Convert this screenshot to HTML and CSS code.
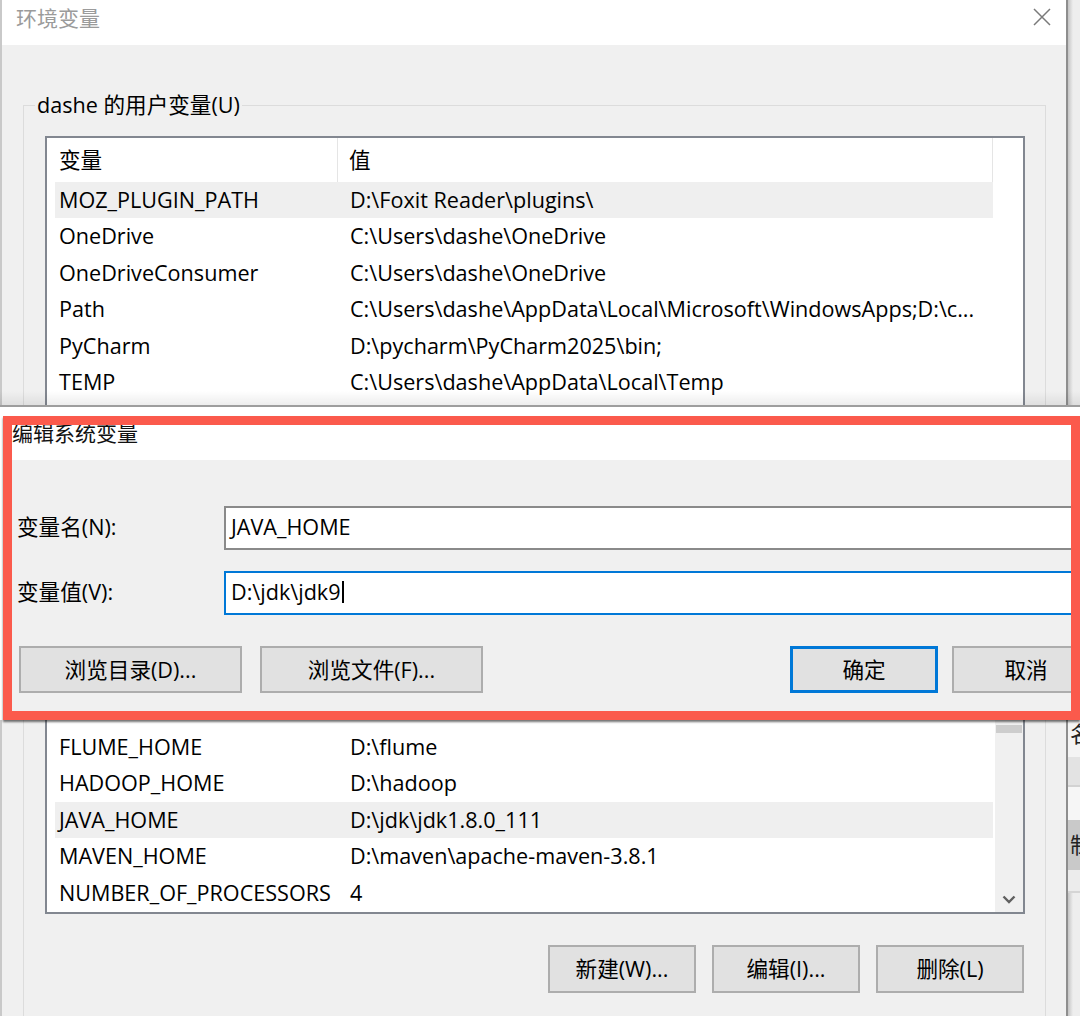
FILE: index.html
```html
<!DOCTYPE html>
<html lang="zh-CN">
<head>
<meta charset="utf-8">
<title>环境变量</title>
<link rel="stylesheet" href="styles.css">
</head>
<body>
<section class="top">
  <div class="win">
    <div class="titlebar">
      <span class="title">环境变量</span>
      <svg class="close" viewBox="0 0 18 18" width="18" height="18"><path d="M1 1 L17 17 M17 1 L1 17" stroke="#7a7a7a" stroke-width="1.5" fill="none"/></svg>
    </div>
    <fieldset class="group">
      <legend>dashe 的用户变量(U)</legend>
      <div class="listbox">
        <div class="lv-main">
          <div class="lv-head"><div class="h1">变量</div><div class="h2">值</div></div>
          <div class="row sel"><div class="k">MOZ_PLUGIN_PATH</div><div class="v">D:\Foxit Reader\plugins\</div></div>
          <div class="row"><div class="k">OneDrive</div><div class="v">C:\Users\dashe\OneDrive</div></div>
          <div class="row"><div class="k">OneDriveConsumer</div><div class="v">C:\Users\dashe\OneDrive</div></div>
          <div class="row"><div class="k">Path</div><div class="v">C:\Users\dashe\AppData\Local\Microsoft\WindowsApps;D:\c...</div></div>
          <div class="row"><div class="k">PyCharm</div><div class="v">D:\pycharm\PyCharm2025\bin;</div></div>
          <div class="row"><div class="k">TEMP</div><div class="v">C:\Users\dashe\AppData\Local\Temp</div></div>
          <div class="row empty"></div>
        </div>
        <div class="lv-scroll"></div>
      </div>
    </fieldset>
  </div>
  <div class="strip strip-top"></div>
</section>

<div class="gap"></div>

<section class="edit">
  <div class="dlg-title"><span>编辑系统变量</span></div>
  <div class="dlg-body">
    <div class="field">
      <label class="lbl">变量名(N):</label>
      <div class="input">JAVA_HOME</div>
    </div>
    <div class="field field2">
      <label class="lbl">变量值(V):</label>
      <div class="input focus">D:\jdk\jdk9<span class="caret"></span></div>
    </div>
    <div class="dlg-buttons">
      <button class="btn wide">浏览目录(D)...</button>
      <button class="btn wide second">浏览文件(F)...</button>
      <span class="spacer"></span>
      <button class="btn ok">确定</button>
      <button class="btn cancel">取消</button>
    </div>
  </div>
</section>

<section class="bottom">
  <div class="win win-bottom">
    <div class="group2">
      <div class="listbox listbox2">
        <div class="lv-main rows2">
          <div class="row"><div class="k">FLUME_HOME</div><div class="v">D:\flume</div></div>
          <div class="row"><div class="k">HADOOP_HOME</div><div class="v">D:\hadoop</div></div>
          <div class="row sel"><div class="k">JAVA_HOME</div><div class="v">D:\jdk\jdk1.8.0_111</div></div>
          <div class="row"><div class="k">MAVEN_HOME</div><div class="v">D:\maven\apache-maven-3.8.1</div></div>
          <div class="row"><div class="k">NUMBER_OF_PROCESSORS</div><div class="v">4</div></div>
        </div>
        <div class="vscroll">
          <div class="thumb"></div>
          <svg class="chev" viewBox="0 0 14 9" width="14" height="9"><path d="M1.5 1.5 L7 7 L12.5 1.5" stroke="#606060" stroke-width="2.4" fill="none"/></svg>
        </div>
      </div>
      <div class="btnrow">
        <button class="btn">新建(W)...</button>
        <button class="btn">编辑(I)...</button>
        <button class="btn">删除(L)</button>
      </div>
    </div>
  </div>
  <div class="strip strip-bottom">
    <div class="sb sb-a">名</div>
    <div class="sb sb-b"></div>
    <div class="sb sb-c"></div>
    <div class="sb sb-d">制</div>
    <div class="sb sb-e"></div>
  </div>
</section>
</body>
</html>
```

FILE: styles.css
```css
* { box-sizing: border-box; }
html, body { margin: 0; padding: 0; }
body {
  width: 1080px;
  height: 1016px;
  overflow: hidden;
  background: #fff;
  font-family: "Open Sans", "Noto Sans CJK SC", sans-serif;
  font-size: 21.6px;
  color: #000;
}

/* ---------- top window (环境变量) ---------- */
.top {
  display: flex;
  height: 407px;
  overflow: hidden;
  position: relative;
}
.top::after {
  content: "";
  position: absolute;
  left: 0; right: 0; bottom: 0;
  height: 14px;
  background: linear-gradient(rgba(0,0,0,0), rgba(0,0,0,0.07));
  border-bottom: 2px solid #9d9d9d;
}
.win {
  flex: 0 0 1068px;
  width: 1068px;
  background: #f0f0f0;
  border-left: 2px solid #c9c9c9;
  border-right: 2px solid #8e8e8e;
}
.titlebar {
  height: 45px;
  background: #fff;
  display: flex;
  justify-content: space-between;
  align-items: flex-start;
  padding-left: 14px;
}
.title { line-height: 36px; color: #9b9b9b; font-size: 21px; }
.close { margin: 8px 15px 0 0; }

.group {
  margin: 46px 20px 0 21px;
  padding: 17px 20px 0 21px;
  border: 1px solid #dcdcdc;
  min-width: 0;
}
.group legend {
  margin-left: -10px;
  padding: 0 2px;
  line-height: 28px;
}

.listbox {
  display: flex;
  background: #fff;
  border: 2px solid #828790;
}
.lv-main { flex: 1; min-width: 0; }
.lv-scroll { flex: 0 0 30px; }

.lv-head { display: flex; height: 44px; line-height: 44px; }
.lv-head .h1 { width: 291px; padding-left: 12px; border-right: 1px solid #e5e5e5; }
.lv-head .h2 { flex: 1; padding-left: 11px; border-right: 1px solid #e5e5e5; }

.row {
  display: flex;
  height: 36.4px;
  line-height: 36.4px;
  margin-left: 8px;
  white-space: nowrap;
}
.row .k { flex: 0 0 283px; padding-left: 4px; }
.row .v { flex: 1; padding-left: 12px; overflow: hidden; }
.row.sel { background: #efefef; }

.strip { flex: 1; }
.strip-top {
  background: linear-gradient(90deg, #c4c4c4, #eeeeee 5px);
}

.gap { height: 9px; background: #fff; }

/* ---------- edit dialog (编辑系统变量) ---------- */
.edit {
  margin-left: 3px;
  height: 304px;
  border: 9px solid #fb5a4c;
  overflow: hidden;
  position: relative;
  box-shadow: 0 2px 2px rgba(0,0,0,0.55);
}
.dlg-title {
  height: 35px;
  background: #fff;
  overflow: hidden;
  color: #111;
  font-size: 21px;
}
.dlg-title span {
  display: block;
  line-height: 22px;
  margin-top: -3px;
}
.dlg-body {
  height: 251px;
  background: #f0f0f0;
  padding-top: 46px;
}
.field { display: flex; align-items: center; height: 44px; }
.field2 { margin-top: 21px; }
.lbl { flex: 0 0 212px; padding-left: 5px; padding-bottom: 5px; }
.input {
  flex: 1;
  height: 44px;
  margin-right: -30px;
  background: #fff;
  border: 2px solid #8a8a8a;
  padding-left: 5px;
  line-height: 37px;
  white-space: nowrap;
}
.input.focus { border-color: #0078d7; }
.caret {
  display: inline-block;
  width: 2px;
  height: 22px;
  background: #000;
  vertical-align: -3px;
  margin-left: 1px;
}

.dlg-buttons {
  display: flex;
  margin-top: 31px;
  padding-left: 7px;
}
.btn {
  flex: 0 0 148px;
  width: 148px;
  height: 47px;
  padding: 0 0 3px;
  background: #e1e1e1;
  border: 2px solid #adadad;
  font-family: inherit;
  font-size: 21.6px;
  color: #000;
}
.btn.wide { flex-basis: 223px; width: 223px; }
.btn.second { margin-left: 18px; }
.spacer { flex: 1; }
.btn.ok { border: 3px solid #0078d7; }
.btn.cancel { margin-left: 14px; margin-right: -29px; }

/* ---------- bottom window (系统变量) ---------- */
.bottom { display: flex; height: 296px; }
.win-bottom { height: 100%; }
.group2 {
  height: 100%;
  margin: 0 20px 0 21px;
  padding: 0 20px 0 21px;
  border-left: 1px solid #dcdcdc;
  border-right: 1px solid #dcdcdc;
}
.listbox2 {
  height: 194px;
  border-top: none;
}
.rows2 { padding-top: 9px; }
.vscroll {
  flex: 0 0 28px;
  margin-left: 2px;
  background: #f0f0f0;
  display: flex;
  flex-direction: column;
  justify-content: space-between;
  align-items: center;
}
.thumb { width: 26px; height: 8px; margin-top: 5px; background: #cdcdcd; }
.chev { margin-bottom: 8px; }

.btnrow {
  display: flex;
  justify-content: flex-end;
  gap: 16px;
  margin-top: 31px;
  margin-right: 1px;
}
.btnrow .btn { height: 48px; }

.strip-bottom {
  display: flex;
  flex-direction: column;
  background: linear-gradient(90deg, #c4c4c4, #eeeeee 5px);
  overflow: hidden;
}
.sb { white-space: nowrap; overflow: hidden; line-height: 30px; color: #222; padding-left: 2px; }
.sb-a { height: 37px; line-height: 28px; background: #f4f4f4; }
.sb-b { height: 30px; background: #e3e3e3; border-bottom: 2px solid #d2d2d2; }
.sb-c { height: 33px; background: #f6f6f6; }
.sb-d { height: 50px; line-height: 50px; background: #c9c9c9; }
.sb-e { height: 23px; background: #ececec; border-bottom: 2px solid #d5d5d5; }
```
